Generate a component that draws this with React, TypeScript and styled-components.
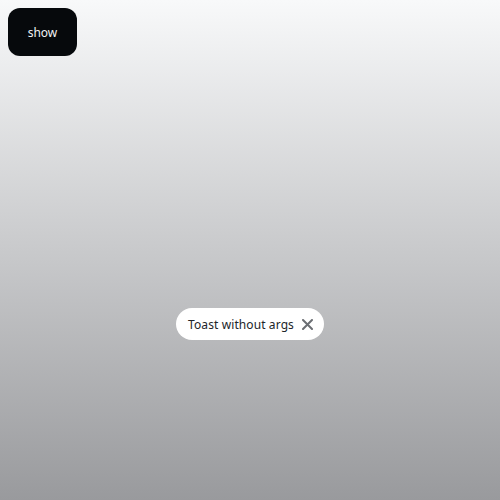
import React from "react";
import styled, { createGlobalStyle } from "styled-components";

const Global = createGlobalStyle`
  html, body { margin: 0; padding: 0; height: 100%; }
  body {
    font-family: "Noto Sans", sans-serif;
    background: linear-gradient(to bottom, #f8f9fa 0%, #999a9d 100%);
    background-attachment: fixed;
  }
  #root { min-height: 100vh; }
`;

const Page = styled.div`
  min-height: 100vh;
  padding: 8px;
  box-sizing: border-box;
`;

const ShowButton = styled.button`
  width: 69px;
  height: 48px;
  border: none;
  border-radius: 12px;
  background: #06090c;
  color: #f1f3f5;
  font-family: "Noto Sans", sans-serif;
  font-size: 12px;
  cursor: pointer;
`;

const ToastLayer = styled.div`
  position: fixed;
  inset: 0;
  display: flex;
  align-items: center;
  justify-content: center;
  padding-top: 148px;
  pointer-events: none;
`;

const Toast = styled.div`
  display: flex;
  align-items: center;
  gap: 8px;
  height: 32px;
  padding: 0 10px 0 12px;
  box-sizing: border-box;
  background: #ffffff;
  border-radius: 16px;
  color: #212529;
  font-size: 12px;
  letter-spacing: 0.1px;
  pointer-events: auto;
`;

const CloseButton = styled.button`
  display: flex;
  align-items: center;
  justify-content: center;
  width: 12px;
  height: 14px;
  padding: 0;
  border: none;
  background: none;
  color: #6b6e73;
  cursor: pointer;
`;

export default function App() {
  return (
    <>
      <Global />
      <Page>
        <ShowButton>show</ShowButton>
      </Page>
      <ToastLayer>
        <Toast>
          <span>Toast without args</span>
          <CloseButton aria-label="close">
            <svg width="11" height="11" viewBox="0 0 11 11">
              <path d="M1 1 L10 10 M10 1 L1 10" stroke="currentColor" strokeWidth="2" strokeLinecap="round" />
            </svg>
          </CloseButton>
        </Toast>
      </ToastLayer>
    </>
  );
}
